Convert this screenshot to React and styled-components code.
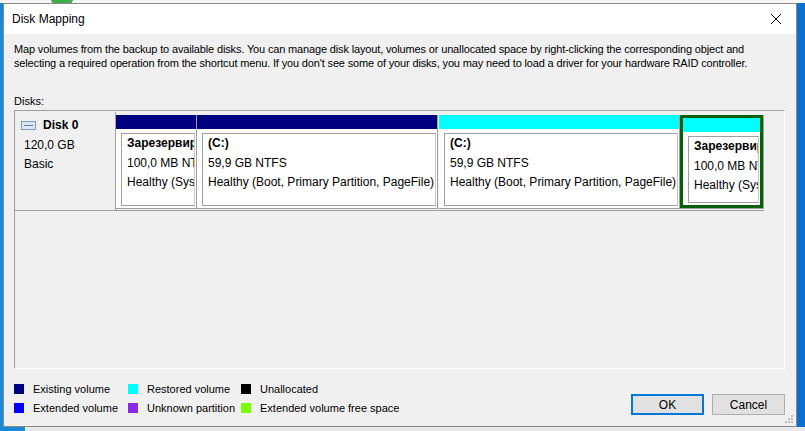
import React from 'react';
import styled, { createGlobalStyle } from 'styled-components';

const GlobalStyle = createGlobalStyle`
  html, body {
    margin: 0;
    padding: 0;
    width: 805px;
    height: 431px;
    overflow: hidden;
  }
  body {
    font-family: "Liberation Sans", Arial, sans-serif;
    background:
      radial-gradient(circle at 62px -5px, #3fae49 0 12px, transparent 12.5px),
      linear-gradient(to bottom, #f6f6f6 0 3px, transparent 3px),
      linear-gradient(to right, #1a8ad8 0 25px, transparent 25px),
      linear-gradient(to top, #e9e9e9 0 4px, transparent 4px),
      #0b6fd0;
  }
`;

const Desktop = styled.div`
  padding: 3px 8px 4px 3px;
  height: 431px;
  box-sizing: border-box;
  display: flex;
`;

const Dialog = styled.div`
  position: relative;
  flex: 1;
  display: flex;
  flex-direction: column;
  background: #f0f0f0;
  border: 1px solid #8a8a8a;
  box-sizing: border-box;
  overflow: hidden;
`;

const TitleBar = styled.div`
  flex-shrink: 0;
  height: 30px;
  background: #fff;
  display: flex;
  align-items: center;
  justify-content: space-between;
  padding: 0 14px 0 8px;
  font-size: 12px;
  color: #000;
`;

const CloseButton = styled.div`
  width: 12px;
  height: 12px;
  display: flex;
  align-items: center;
  justify-content: center;
`;

const Content = styled.div`
  flex: 1;
  display: flex;
  flex-direction: column;
  padding: 8px 11px 0 10px;
  font-size: 11px;
  color: #000;
`;

const Description = styled.p`
  margin: 0;
  line-height: 14px;
  letter-spacing: -0.15px;
  white-space: nowrap;
`;

const Label = styled.div`
  margin-top: 24px;
  line-height: 14px;
`;

const Panel = styled.div`
  flex-shrink: 0;
  margin-top: 2px;
  height: 259px;
  box-sizing: border-box;
  border: 1px solid;
  border-color: #a0a0a0 #fff #fff #a0a0a0;
  padding-top: 1px;
`;

const DiskRow = styled.div`
  display: flex;
  height: 99px;
`;

const DiskCell = styled.div`
  width: 101px;
  box-sizing: border-box;
  border-right: 1px solid #a0a0a0;
  border-bottom: 1px solid #a0a0a0;
  padding: 4px 0 0 9px;
  font-size: 12px;
  line-height: 19.5px;
`;

const DiskTitle = styled.div`
  display: flex;
  align-items: center;
  gap: 7px;
  margin-left: -3px;
  font-weight: bold;
`;

const Partitions = styled.div`
  display: flex;
  align-items: flex-start;
  border-bottom: 1px solid #a0a0a0;
  height: 98px;
`;

const Slot = styled.div`
  width: ${p => p.$w}px;
  margin-left: ${p => p.$gap || 0}px;
  margin-top: 3px;
  height: 94px;
  box-sizing: border-box;
  border-right: 1px solid #a0a0a0;
  border-bottom: 1px solid #a0a0a0;
  display: flex;
`;

const PartitionBox = styled.div`
  flex: 1;
  min-width: 0;
  display: flex;
  flex-direction: column;
  background: #fff;
  border: ${p => (p.$selected ? '3px solid #0a5f0a' : 'none')};
`;

const Bar = styled.div`
  height: 14px;
  background: ${p => p.$color};
  flex-shrink: 0;
`;

const Body = styled.div`
  flex: 1;
  min-height: 0;
  padding: 4px 1px 2px 5px;
  display: flex;
`;

const Inner = styled.div`
  flex: 1;
  min-width: 0;
  border: 1px solid #a0a0a0;
  border-right-color: #c8c8c8;
  padding: 0 0 0 5px;
  font-size: 12px;
  line-height: 19.5px;
  overflow: hidden;
  white-space: nowrap;
`;

const Name = styled.div`
  font-weight: bold;
`;

const Footer = styled.div`
  display: flex;
  justify-content: space-between;
  align-items: flex-start;
  padding-top: 13px;
`;

const Legend = styled.div`
  display: grid;
  grid-template-columns: 114px 113px auto;
  grid-auto-rows: 19px;
`;

const LegendItem = styled.div`
  display: flex;
  align-items: flex-start;
  gap: 9px;
  line-height: 14px;
`;

const Swatch = styled.span`
  width: 10px;
  height: 10px;
  margin-top: 2px;
  background: ${p => p.$color};
  flex-shrink: 0;
`;

const Buttons = styled.div`
  display: flex;
  gap: 8px;
  margin-top: 12px;
`;

const Button = styled.button`
  width: 73px;
  height: 21px;
  box-sizing: border-box;
  background: #e1e1e1;
  border: ${p => (p.$primary ? '2px solid #0078d7' : '1px solid #adadad')};
  font-family: "Liberation Sans", Arial, sans-serif;
  font-size: 12px;
  color: #000;
  padding: 0;
`;

const Grip = styled.svg`
  position: absolute;
  right: 2px;
  bottom: 2px;
`;

const partitions = [
  { w: 81, color: '#000080', name: 'Зарезервировано системой', size: '100,0 MB NTFS', status: 'Healthy (System, Active, Primary Partition)' },
  { w: 241, color: '#000080', name: '(C:)', size: '59,9 GB NTFS', status: 'Healthy (Boot, Primary Partition, PageFile)' },
  { w: 241, gap: 1, color: '#00ffff', name: '(C:)', size: '59,9 GB NTFS', status: 'Healthy (Boot, Primary Partition, PageFile)' },
  { w: 84, color: '#00ffff', name: 'Зарезервировано системой', size: '100,0 MB NTFS', status: 'Healthy (System, Active, Primary Partition)', selected: true },
];

const legend = [
  { color: '#000080', label: 'Existing volume' },
  { color: '#00ffff', label: 'Restored volume' },
  { color: '#000000', label: 'Unallocated' },
  { color: '#0000ff', label: 'Extended volume' },
  { color: '#8a2be2', label: 'Unknown partition' },
  { color: '#7cfc00', label: 'Extended volume free space' },
];

function DiskIcon() {
  return (
    <svg width="15" height="9" viewBox="0 0 15 9">
      <rect x="0.5" y="0.5" width="14" height="8" fill="#dbe8f5" stroke="#7f98b5" />
      <line x1="3" y1="4.5" x2="12" y2="4.5" stroke="#5a7fa8" />
    </svg>
  );
}

export default function App() {
  return (
    <>
      <GlobalStyle />
      <Desktop>
        <Dialog>
          <TitleBar>
            <span>Disk Mapping</span>
            <CloseButton>
              <svg width="12" height="12" viewBox="0 0 12 12">
                <path d="M1 1 L11 11 M11 1 L1 11" stroke="#000" strokeWidth="1" />
              </svg>
            </CloseButton>
          </TitleBar>
          <Content>
            <Description>
              Map volumes from the backup to available disks. You can manage disk layout, volumes or unallocated space by right-clicking the corresponding object and
              <br />
              selecting a required operation from the shortcut menu. If you don't see some of your disks, you may need to load a driver for your hardware RAID controller.
            </Description>
            <Label>Disks:</Label>
            <Panel>
              <DiskRow>
                <DiskCell>
                  <DiskTitle>
                    <DiskIcon />
                    Disk 0
                  </DiskTitle>
                  <div>120,0 GB</div>
                  <div>Basic</div>
                </DiskCell>
                <Partitions>
                  {partitions.map((p, i) => (
                    <Slot key={i} $w={p.w} $gap={p.gap}>
                      <PartitionBox $selected={p.selected}>
                        <Bar $color={p.color} />
                        <Body>
                          <Inner>
                            <Name>{p.name}</Name>
                            <div>{p.size}</div>
                            <div>{p.status}</div>
                          </Inner>
                        </Body>
                      </PartitionBox>
                    </Slot>
                  ))}
                </Partitions>
              </DiskRow>
            </Panel>
            <Footer>
              <Legend>
                {legend.map(l => (
                  <LegendItem key={l.label}>
                    <Swatch $color={l.color} />
                    {l.label}
                  </LegendItem>
                ))}
              </Legend>
              <Buttons>
                <Button $primary>OK</Button>
                <Button>Cancel</Button>
              </Buttons>
            </Footer>
          </Content>
          <Grip width="9" height="9" viewBox="0 0 9 9">
            <rect x="6" y="0" width="2" height="2" fill="#bcbcbc" />
            <rect x="3" y="3" width="2" height="2" fill="#bcbcbc" />
            <rect x="6" y="3" width="2" height="2" fill="#bcbcbc" />
            <rect x="0" y="6" width="2" height="2" fill="#bcbcbc" />
            <rect x="3" y="6" width="2" height="2" fill="#bcbcbc" />
            <rect x="6" y="6" width="2" height="2" fill="#bcbcbc" />
          </Grip>
        </Dialog>
      </Desktop>
    </>
  );
}
